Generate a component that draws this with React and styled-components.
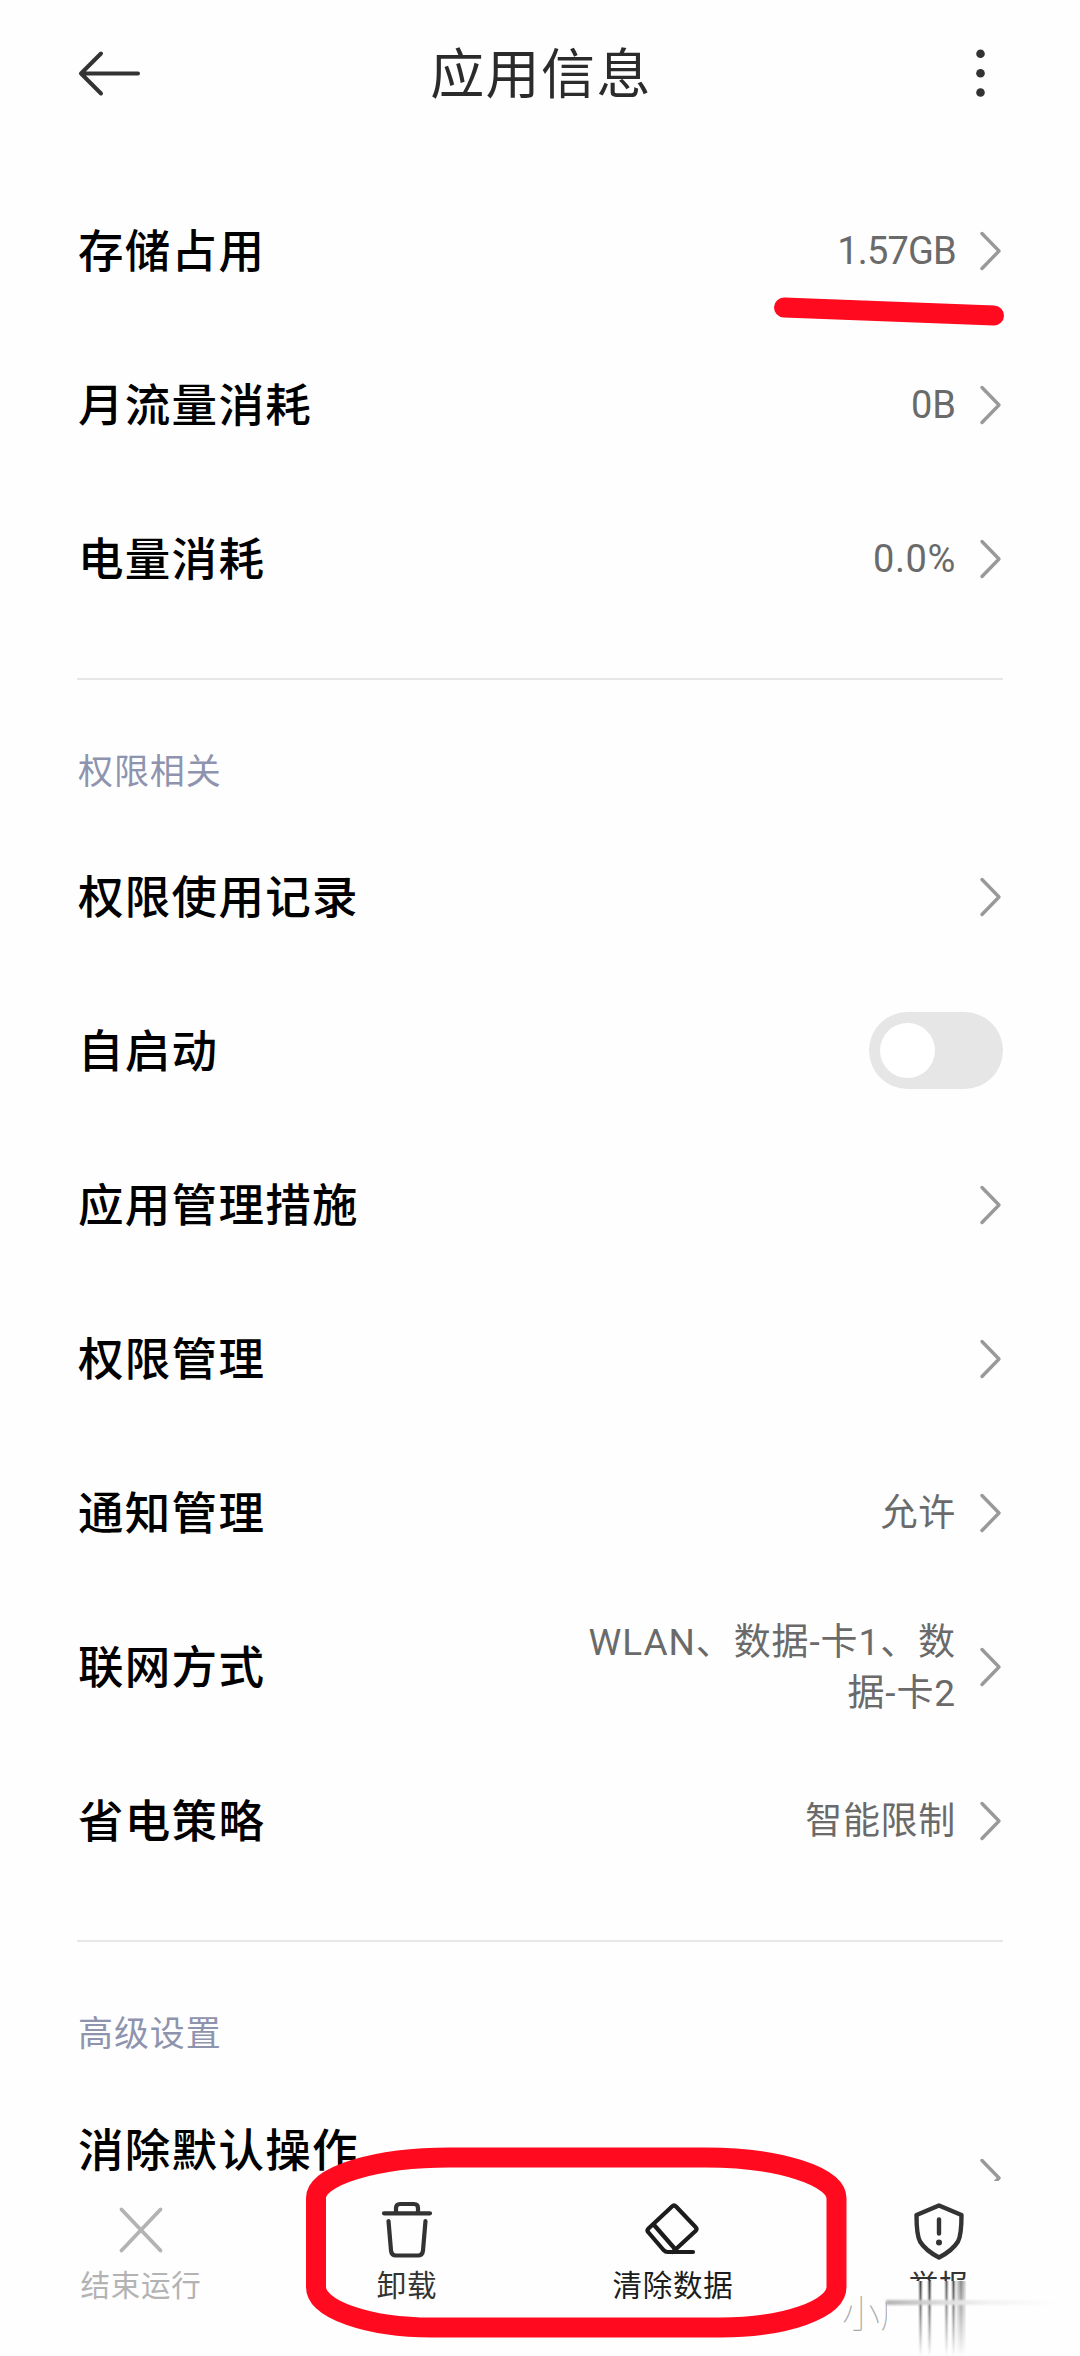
import React from 'react';
import styled, { createGlobalStyle } from 'styled-components';

const Global = createGlobalStyle`
  * { box-sizing: border-box; }
  body {
    margin: 0;
    background: #fefefe;
    font-family: "Noto Sans CJK SC", sans-serif;
  }
`;

const Screen = styled.div`
  position: relative;
  width: 1080px;
  height: 2356px;
  overflow: hidden;
  display: flex;
  flex-direction: column;
  background: #fefefe;
`;

const Header = styled.header`
  flex: none;
  height: 148px;
  padding: 0 77px;
  display: flex;
  align-items: center;
  justify-content: space-between;
`;

const Title = styled.h1`
  margin: 0;
  padding: 0 0 6px 2px;
  font-size: 54px;
  line-height: 60px;
  font-weight: 400;
  letter-spacing: 1.4px;
  color: #2b2b2b;
`;

const List = styled.main`
  flex: 1;
  min-height: 0;
  overflow: hidden;
  padding: 26px 77px 0;
`;

const Row = styled.div`
  height: ${(p) => (p.$tall ? 192 : 154)}px;
  display: flex;
  align-items: center;
`;

const Label = styled.div`
  flex: 1;
  padding: 0 0 ${(p) => (p.$raised ? 62 : 6)}px 1px;
  font-size: 45.5px;
  line-height: 54px;
  font-weight: 500;
  letter-spacing: 1.3px;
  color: #000;
  white-space: nowrap;
`;

const Value = styled.div`
  margin-right: 22px;
  padding-top: 1px;
  text-align: right;
  font-family: Roboto, "Noto Sans CJK SC", sans-serif;
  font-size: ${(p) => p.$size || 37}px;
  line-height: 51px;
  font-weight: 400;
  letter-spacing: ${(p) => p.$spacing || 0}px;
  color: #6a6a6a;
  white-space: pre;
`;

const Divider = styled.hr`
  margin: 42px 0 0;
  border: 0;
  height: 2px;
  background: #e7e7e7;
`;

const SectionTitle = styled.h2`
  margin: 0;
  padding: 63px 0 25px 1px;
  font-size: 35px;
  line-height: 52px;
  font-weight: 400;
  letter-spacing: 0.9px;
  color: #8f94ae;
`;

const Switch = styled.div`
  width: 134px;
  height: 77px;
  margin-bottom: 2px;
  padding: 11px;
  border-radius: 39px;
  background: #e6e6e6;
`;

const Knob = styled.div`
  width: 55px;
  height: 55px;
  border-radius: 50%;
  background: #fff;
`;

const Toolbar = styled.footer`
  flex: none;
  height: 175px;
  padding: 0 8px;
  display: grid;
  grid-template-columns: repeat(4, 266px);
  background: #fefefe;
`;

const Action = styled.div`
  padding-top: 17px;
  display: flex;
  flex-direction: column;
  align-items: center;
  color: ${(p) => p.$color || '#333'};
`;

const ActionText = styled.div`
  margin-top: 1px;
  height: ${(p) => (p.$cut ? 18 : 40)}px;
  overflow: hidden;
  font-size: 29.5px;
  line-height: 40px;
  font-weight: 400;
  letter-spacing: 0.8px;
  white-space: nowrap;
`;

const Streaks = styled.div`
  position: relative;
  width: 54px;
  height: 76px;
  mask-image: linear-gradient(#000, rgba(0, 0, 0, 0.5) 50%, transparent);
`;

const Streak = styled.i`
  position: absolute;
  top: 0;
  bottom: 0;
  left: ${(p) => p.$x}px;
  width: ${(p) => p.$w}px;
  background: linear-gradient(90deg, transparent, ${(p) => p.$c}, transparent);
`;

const Watermark = styled.div`
  position: absolute;
  left: 842px;
  top: 2288px;
  height: 46px;
  width: 45px;
  overflow: hidden;
  font-size: 38px;
  line-height: 46px;
  font-weight: 100;
  color: #a8a8a8;
  white-space: nowrap;
`;

const Haze = styled.div`
  position: absolute;
  left: 886px;
  top: 2300px;
  width: 170px;
  height: 5px;
  background: linear-gradient(90deg, #b4b4b4, #dedede 35%, #f2f2f2 60%, transparent);
  filter: blur(1.2px);
`;

const Marks = styled.svg`
  position: absolute;
  left: 0;
  top: 0;
  pointer-events: none;
`;

const Chevron = () => (
  <svg width="25" height="44" viewBox="0 0 25 44" fill="none">
    <path d="M4 4.5 21 22 4 39.5" stroke="#999" strokeWidth="3.4" strokeLinecap="round" strokeLinejoin="round" />
  </svg>
);

const line = { fill: 'none', stroke: 'currentColor', strokeWidth: 4.2, strokeLinecap: 'round', strokeLinejoin: 'round' };

const CloseIcon = () => (
  <svg width="64" height="64" viewBox="0 0 64 64">
    <path {...line} strokeWidth="3.8" d="M12.5 11.5 51.5 52.5M51.5 11.5 12.5 52.5" />
  </svg>
);

const TrashIcon = () => (
  <svg width="64" height="64" viewBox="0 0 64 64">
    <path {...line} d="M9 15.3H55M21 15V10Q21 6 25 6H39Q43 6 43 10V15M13.5 23 16 52.5Q16.5 57.5 21 57.5H43Q47.5 57.5 48 52.5L50.5 23" />
  </svg>
);

const EraserIcon = () => (
  <svg width="64" height="64" viewBox="0 0 64 64">
    <path {...line} d="M31 8.5Q33 6.5 35 8.5L54.5 29Q56.5 31 54.5 33L34.5 51.5 13.5 27.500M31 8.500 7.500 30.500Q5.500 32.500 7.500 34.500L22.500 52Q24.500 54 26.500 54H52M34.500 51.500 31.500 54" />
  </svg>
);

const ShieldIcon = () => (
  <svg width="64" height="64" viewBox="0 0 64 64">
    <path {...line} strokeWidth="4.4" d="M32 7.5 54.5 17Q54.5 37 51 43.5Q45.5 52.5 32 59.5Q18.5 52.5 13 43.5Q9.5 37 9.5 17Z" />
    <path {...line} strokeWidth="4.4" d="M32 21.5V35.5" />
    <circle cx="32" cy="44.5" r="3" fill="currentColor" />
  </svg>
);

const Item = ({ label, value, spacing, size, children }) => (
  <Row>
    <Label>{label}</Label>
    {value && <Value $spacing={spacing} $size={size}>{value}</Value>}
    {children || <Chevron />}
  </Row>
);

export default function App() {
  return (
    <Screen>
      <Global />
      <Header>
        <svg width="64" height="50" viewBox="0 0 64 50" fill="none" stroke="#333" strokeWidth="4" strokeLinecap="round" strokeLinejoin="round">
          <path d="M61 24.5H4M24 4.5 4 24.5 24 44.5" />
        </svg>
        <Title>应用信息</Title>
        <svg width="64" height="50" viewBox="0 0 64 50" fill="#333">
          <circle cx="41.5" cy="4.8" r="4.3" />
          <circle cx="41.5" cy="24.2" r="4.3" />
          <circle cx="41.5" cy="43.5" r="4.3" />
        </svg>
      </Header>
      <List>
        <Item label="存储占用" value="1.57GB" size={38} spacing={-0.8} />
        <Item label="月流量消耗" value="0B" size={38} />
        <Item label="电量消耗" value="0.0%" size={38} spacing={0.6} />
        <Divider />
        <SectionTitle>权限相关</SectionTitle>
        <Item label="权限使用记录" />
        <Item label="自启动">
          <Switch><Knob /></Switch>
        </Item>
        <Item label="应用管理措施" />
        <Item label="权限管理" />
        <Item label="通知管理" value="允许" spacing={0.7} />
        <Item label="联网方式" value={'WLAN、数据-卡1、数\n据-卡2'} spacing={0.9} />
        <Item label="省电策略" value="智能限制" spacing={0.7} />
        <Divider />
        <SectionTitle>高级设置</SectionTitle>
        <Row $tall>
          <Label $raised>消除默认操作</Label>
          <Chevron />
        </Row>
      </List>
      <Toolbar>
        <Action $color="#b3b3b3"><CloseIcon /><ActionText>结束运行</ActionText></Action>
        <Action><TrashIcon /><ActionText>卸载</ActionText></Action>
        <Action $color="#1c1c1c"><EraserIcon /><ActionText>清除数据</ActionText></Action>
        <Action>
          <ShieldIcon />
          <ActionText $cut>举报</ActionText>
          <Streaks>
            <Streak $x={6} $w={5} $c="#444" />
            <Streak $x={15} $w={5} $c="#444" />
            <Streak $x={32} $w={5} $c="#666" />
            <Streak $x={39} $w={5} $c="#555" />
            <Streak $x={43} $w={12} $c="#888" />
          </Streaks>
        </Action>
      </Toolbar>
      <Watermark>小广</Watermark>
      <Haze />
      <Marks width="1080" height="2356" viewBox="0 0 1080 2356" fill="none" stroke="#ff0a1e" strokeWidth="20">
        <path d="M784 307.5 994 315.5" strokeLinecap="round" />
        <path d="M450 2157.5H705A131 41 0 0 1 836.5 2199V2287A116 40.5 0 0 1 720 2327.5H432A116 40.5 0 0 1 316 2287V2198A134 40.5 0 0 1 450 2157.5Z" />
      </Marks>
    </Screen>
  );
}
